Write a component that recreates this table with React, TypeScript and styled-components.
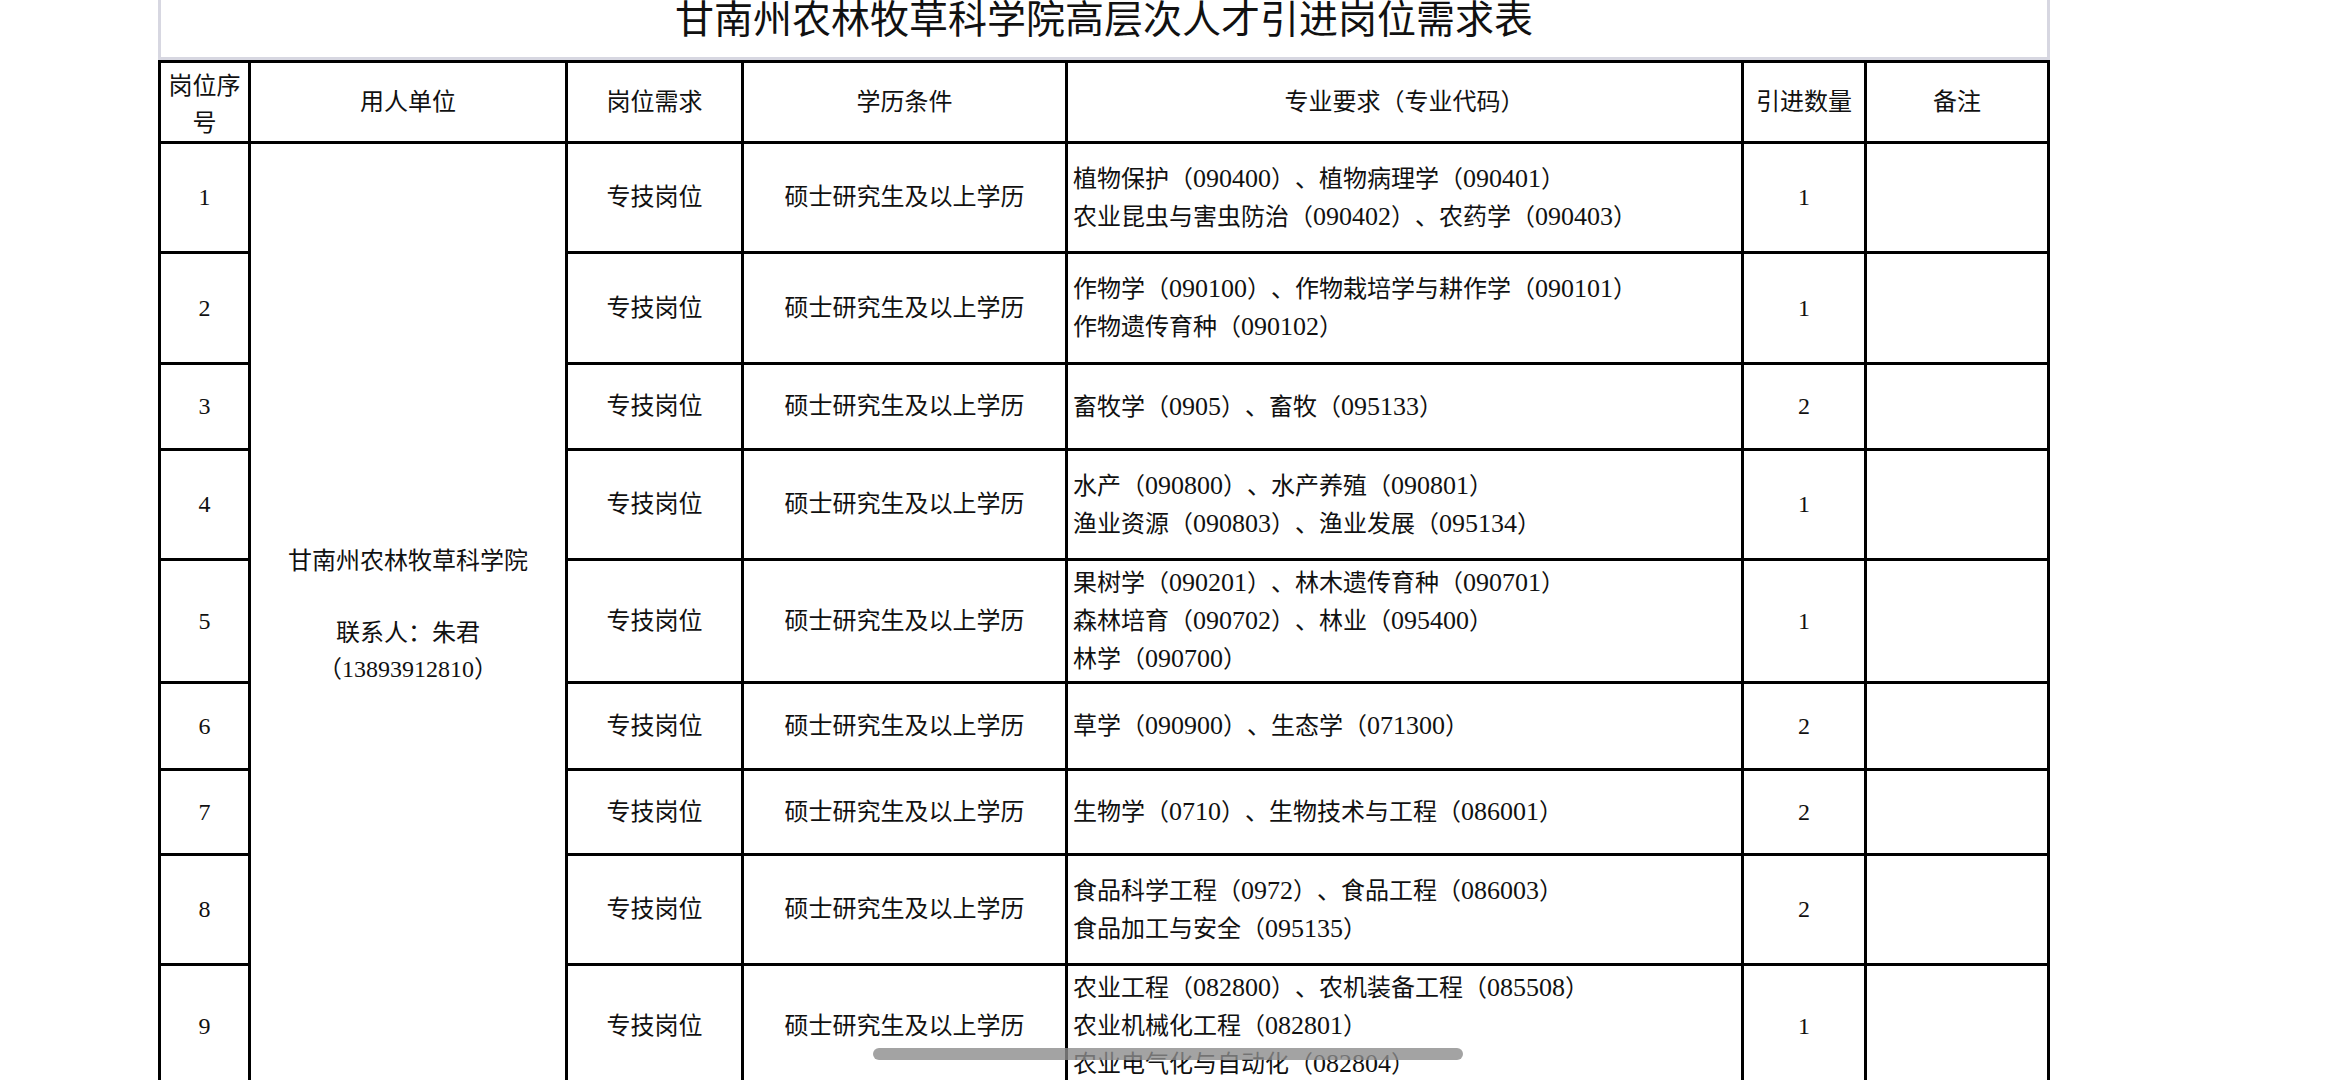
import React from 'react';
import styled, { createGlobalStyle } from 'styled-components';

const GlobalStyle = createGlobalStyle`
  html, body {
    margin: 0;
    padding: 0;
    background: #fff;
  }
  body {
    font-family: "Liberation Serif", "Noto Sans CJK SC", serif;
    color: #111;
    overflow: hidden;
    text-spacing-trim: space-all;
  }
`;

const Page = styled.div`
  position: relative;
  height: 1080px;
  overflow: hidden;
  padding-left: 158px;
`;

const Sheet = styled.div`
  width: 1892px;
`;

const TitleBar = styled.div`
  height: 57px;
  border: 3px solid #d7d7e1;
  border-top: none;
  display: flex;
  justify-content: center;
  overflow: hidden;
  & h1 {
    margin: -3px 0 0;
    font-family: "Noto Sans CJK SC", sans-serif;
    font-weight: 400;
    font-size: 39px;
    line-height: 39px;
    color: #111;
  }
`;

const Table = styled.table`
  width: 1892px;
  table-layout: fixed;
  border-collapse: collapse;
  font-size: 24px;
  & td,
  & th {
    border: 3px solid #000;
    padding: 0;
    text-align: center;
    vertical-align: middle;
    line-height: 37px;
    font-weight: 400;
  }
`;

const Row = styled.tr<{ $h: number }>`
  height: ${(p) => p.$h}px;
`;

const HeadCell = styled.th`
  font-family: "Noto Sans CJK SC", sans-serif;
  color: #111;
  padding: 0 4px !important;
  & span {
    position: relative;
    top: -3px;
  }
`;

const UnitCell = styled.td`
  line-height: 36px !important;
  & p {
    margin: 0;
  }
`;

const MajorCell = styled.td`
  text-align: left !important;
  padding-left: 5px !important;
  & div {
    white-space: nowrap;
  }
`;

const Num = styled.span`
  font-size: 26px;
`;

const ScrollThumb = styled.div`
  position: absolute;
  left: 873px;
  top: 1048px;
  width: 590px;
  height: 12px;
  border-radius: 6px;
  background: rgba(140, 140, 140, 0.8);
`;

const rows: { n: number; majors: string[]; count: number; h: number }[] = [
  { n: 1, majors: ['植物保护（090400）、植物病理学（090401）', '农业昆虫与害虫防治（090402）、农药学（090403）'], count: 1, h: 110 },
  { n: 2, majors: ['作物学（090100）、作物栽培学与耕作学（090101）', '作物遗传育种（090102）'], count: 1, h: 111 },
  { n: 3, majors: ['畜牧学（0905）、畜牧（095133）'], count: 2, h: 86 },
  { n: 4, majors: ['水产（090800）、水产养殖（090801）', '渔业资源（090803）、渔业发展（095134）'], count: 1, h: 110 },
  { n: 5, majors: ['果树学（090201）、林木遗传育种（090701）', '森林培育（090702）、林业（095400）', '林学（090700）'], count: 1, h: 123 },
  { n: 6, majors: ['草学（090900）、生态学（071300）'], count: 2, h: 87 },
  { n: 7, majors: ['生物学（0710）、生物技术与工程（086001）'], count: 2, h: 85 },
  { n: 8, majors: ['食品科学工程（0972）、食品工程（086003）', '食品加工与安全（095135）'], count: 2, h: 110 },
  { n: 9, majors: ['农业工程（082800）、农机装备工程（085508）', '农业机械化工程（082801）', '农业电气化与自动化（082804）'], count: 1, h: 123 },
];

// digits in the major codes are set a little larger, as in the sheet
const Major: React.FC<{ text: string }> = ({ text }) => (
  <div>
    {text.split(/(\d+)/).map((part, i) =>
      /^\d+$/.test(part) ? <Num key={i}>{part}</Num> : <React.Fragment key={i}>{part}</React.Fragment>
    )}
  </div>
);

const App: React.FC = () => {
  return (
    <Page>
      <GlobalStyle />
      <Sheet>
        <TitleBar>
          <h1>甘南州农林牧草科学院高层次人才引进岗位需求表</h1>
        </TitleBar>
        <Table>
          <colgroup>
            <col style={{ width: 90 }} />
            <col style={{ width: 317 }} />
            <col style={{ width: 176 }} />
            <col style={{ width: 324 }} />
            <col style={{ width: 676 }} />
            <col style={{ width: 123 }} />
            <col style={{ width: 183 }} />
          </colgroup>
          <thead>
            <Row $h={81}>
              <HeadCell>岗位序号</HeadCell>
              <HeadCell><span>用人单位</span></HeadCell>
              <HeadCell><span>岗位需求</span></HeadCell>
              <HeadCell><span>学历条件</span></HeadCell>
              <HeadCell><span>专业要求（专业代码）</span></HeadCell>
              <HeadCell><span>引进数量</span></HeadCell>
              <HeadCell><span>备注</span></HeadCell>
            </Row>
          </thead>
          <tbody>
            {rows.map((r, i) => (
              <Row $h={r.h} key={r.n}>
                <td>{r.n}</td>
                {i === 0 && (
                  <UnitCell rowSpan={rows.length}>
                    <p>甘南州农林牧草科学院</p>
                    <p>&nbsp;</p>
                    <p>联系人：朱君</p>
                    <p>（13893912810）</p>
                  </UnitCell>
                )}
                <td>专技岗位</td>
                <td>硕士研究生及以上学历</td>
                <MajorCell>
                  {r.majors.map((m) => (
                    <Major key={m} text={m} />
                  ))}
                </MajorCell>
                <td>{r.count}</td>
                <td></td>
              </Row>
            ))}
          </tbody>
        </Table>
      </Sheet>
      <ScrollThumb />
    </Page>
  );
};

export default App;
